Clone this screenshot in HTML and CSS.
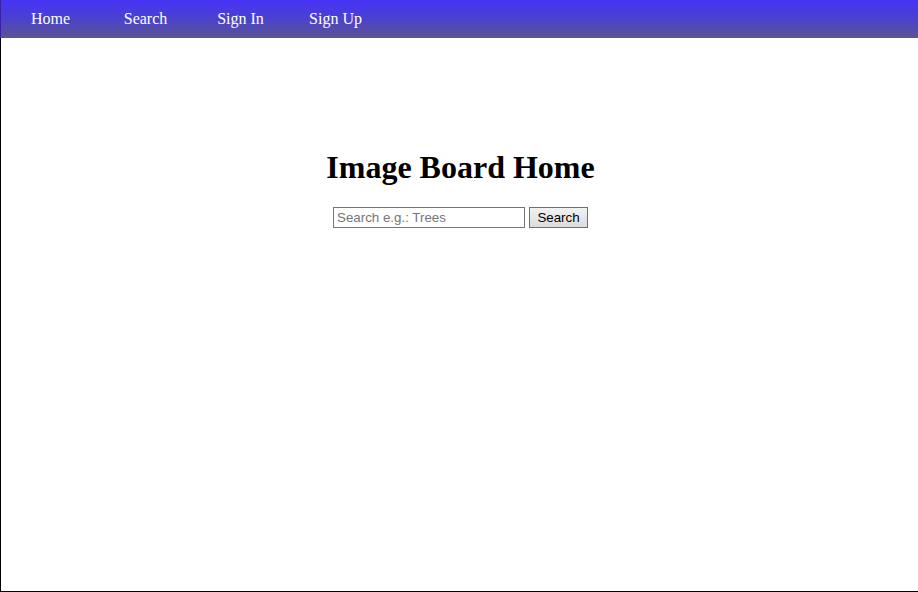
FILE: index.html
```html
<!DOCTYPE html>
<html lang="en">
<head>
<meta charset="utf-8">
<title>Image Board Home</title>
<link rel="stylesheet" href="styles.css">
</head>
<body>
<div class="page">
  <nav class="nav">
    <a class="nav-link" href="#">Home</a>
    <a class="nav-link" href="#">Search</a>
    <a class="nav-link" href="#">Sign In</a>
    <a class="nav-link" href="#">Sign Up</a>
  </nav>
  <main class="main">
    <h1 class="title">Image Board Home</h1>
    <form class="search-form" onsubmit="return false">
      <input class="search-input" type="text" placeholder="Search e.g.: Trees">
      <button class="search-button" type="submit">Search</button>
    </form>
  </main>
</div>
</body>
</html>
```

FILE: styles.css
```css
html, body {
  margin: 0;
  padding: 0;
  background: #fff;
}

.page {
  min-height: 591px;
  border-left: 1px solid #000;
  border-bottom: 1px solid #000;
  font-family: "Liberation Serif", "Times New Roman", serif;
}

.nav {
  display: flex;
  height: 38px;
  margin-left: -1px;
  border-left: 1px solid #3b1fa8;
  padding-left: 2px;
  background: linear-gradient(to bottom, #4733f6 0%, #4a40d0 45%, #5a5590 100%);
  align-items: center;
}

.nav-link {
  width: 95px;
  text-align: center;
  color: #fff;
  text-decoration: none;
  font-size: 16px;
  line-height: 20px;
  padding-bottom: 1px;
}

.main {
  display: flex;
  flex-direction: column;
  align-items: center;
  padding-top: 90px;
  padding-left: 2px;
}

.title {
  margin: 21px 0 21px;
  font-size: 32px;
  font-weight: bold;
  color: #000;
}

.search-form {
  display: flex;
  gap: 4px;
  margin: 0;
}

.search-input {
  box-sizing: border-box;
  width: 192px;
  height: 21px;
  margin: 0;
  padding: 1px 3px;
  border: 1px solid #767676;
  font-family: "Liberation Sans", Arial, sans-serif;
  font-size: 13.333px;
  color: #000;
}

.search-input::placeholder {
  color: #757575;
}

.search-button {
  box-sizing: border-box;
  width: 59px;
  height: 21px;
  margin: 0;
  padding: 0 6px;
  border: 1px solid #707070;
  background: linear-gradient(to bottom, #f2f2f2, #dcdcdc);
  font-family: "Liberation Sans", Arial, sans-serif;
  font-size: 13.333px;
  color: #000;
}
```
